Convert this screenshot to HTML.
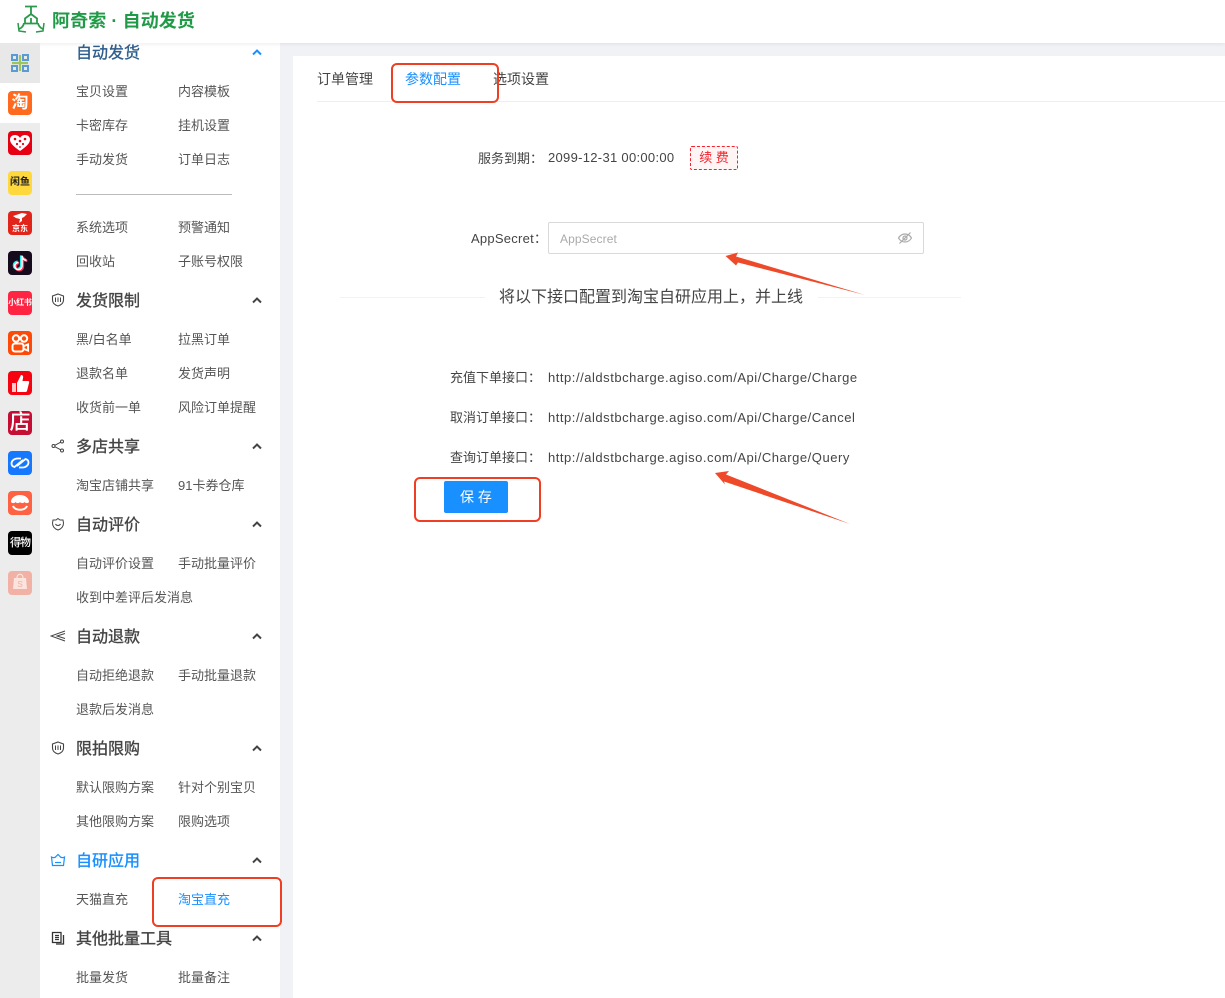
<!DOCTYPE html>
<html lang="zh"><head><meta charset="utf-8"><title>阿奇索 · 自动发货</title>
<style>
*{margin:0;padding:0;box-sizing:border-box}
html,body{width:1225px;height:998px;overflow:hidden;background:#f0f2f5;font-family:"Liberation Sans","Noto Sans CJK SC",sans-serif;color:#333}
.a{position:absolute;white-space:nowrap}
#top{left:0;top:0;width:1225px;height:43px;background:#fff;box-shadow:0 1px 4px rgba(0,21,41,.08)}
#rail{left:0;top:43px;width:40px;height:955px;background:#ececec}
#side{left:40px;top:43px;width:240px;height:955px;background:#fff}
#main{left:293px;top:56px;width:932px;height:942px;background:#fff}
.i{position:absolute;font-size:13px;line-height:20px;color:#555;white-space:nowrap;margin-top:2px}
.h{position:absolute;left:76px;font-size:16px;line-height:24px;color:#444;font-weight:400;white-space:nowrap;-webkit-text-stroke:.35px currentColor;margin-top:4px}
.ic{position:absolute;left:8px;width:24px;height:24px;border-radius:4px;color:#fff;text-align:center;overflow:hidden}
.chev{position:absolute;left:252px;width:10px;height:7px}
.gl{position:absolute;left:51px;width:14px;height:14px}
.l{position:absolute;font-size:13px;line-height:20px;color:#444;text-align:right;white-space:nowrap}
.u{position:absolute;left:548px;font-size:13px;line-height:20px;color:#444;white-space:nowrap;letter-spacing:.53px}
.red{position:absolute;border:2.500px solid #ee3f24;border-radius:6px}
</style></head><body>
<div class="a" id="rail"></div>
<div class="a" id="side"></div>
<div class="a" id="main"></div>
<div class="a" id="top"></div>

<!-- logo -->
<svg class="a" style="left:17px;top:5px" width="28" height="28" viewBox="0 0 28 28" fill="none" stroke="#2a9a4a" stroke-width="1.800">
<path d="M8 1.500h12M14 1.500v9"/><path d="M14 9l-6 4.500v5h12v-5zM14 13v5.500"/><path d="M7 18c-.5 3-2.500 5-5 6M21 18c.5 3 2.500 5 5 6"/><path d="M1 18l1 8 7 1M27 18l-1 8-7 1" stroke-width="1.500"/></svg>
<div class="a" style="left:52px;top:8px;font-size:18px;line-height:26px;font-weight:700;color:#1f9a46;letter-spacing:.1px">阿奇索 · 自动发货</div>

<!-- rail -->
<div class="a" style="left:0;top:43px;width:40px;height:40px;background:#e8e8e8"></div>
<div class="a" style="left:0;top:83px;width:40px;height:40px;background:#fff"></div>
<svg class="a" style="left:10px;top:53px" width="20" height="20" viewBox="0 0 20 20" fill="none"><g stroke="#5b9bd5" stroke-width="2"><path d="M2 2h5v5H2zM13 2h5v5h-5zM2 13h5v5H2zM13 13h5v5h-5z"/></g><path d="M10 2v16M2 10h16" stroke="#9cc65c" stroke-width="2.200"/></svg>
<div class="ic" style="top:91px;background:#ff6a1f;font-size:17px;line-height:24px;font-weight:700">淘</div>
<div class="ic" style="top:131px;background:#e60012"><svg width="24" height="24" viewBox="0 0 24 24"><path d="M12 20C5 15 2 12 2 8.500 2 5.500 4.500 4 7 4c2 0 4 1 5 3 1-2 3-3 5-3 2.500 0 5 1.500 5 4.500C22 12 19 15 12 20z" fill="#fff"/><g fill="#e60012"><circle cx="7" cy="8" r="1.300"/><circle cx="12" cy="10" r="1.300"/><circle cx="17" cy="8" r="1.300"/><circle cx="9" cy="13" r="1.100"/><circle cx="15" cy="13" r="1.100"/><circle cx="12" cy="16" r=".9"/></g></svg></div>
<div class="ic" style="top:171px;background:#ffd83d;color:#222;font-size:10px;line-height:24px;font-weight:700">闲鱼</div>
<div class="ic" style="top:211px;background:#e1251b"><svg width="24" height="15" viewBox="0 0 24 15" style="display:block"><path d="M5 5l6-2 3-1 5 1-3 3-2 1v3l-3 2 1-4-4-1z" fill="#fff"/></svg><div style="font-size:8px;line-height:8px;font-weight:700;margin-top:-1px">京东</div></div>
<div class="ic" style="top:251px;background:#160b1c"><svg width="24" height="24" viewBox="0 0 24 24" fill="none" stroke-width="2.600"><path d="M14 5v10a3.600 3.600 0 1 1-3.600-3.600M14 5c.4 2.500 2 4 4.500 4.300" stroke="#25f4ee" transform="translate(-.8 -.6)"/><path d="M14 5v10a3.600 3.600 0 1 1-3.600-3.600M14 5c.4 2.500 2 4 4.500 4.300" stroke="#fe2c55" transform="translate(.8 .6)"/><path d="M14 5v10a3.600 3.600 0 1 1-3.600-3.600M14 5c.4 2.500 2 4 4.500 4.300" stroke="#fff" stroke-width="1.600"/></svg></div>
<div class="ic" style="top:291px;background:#ff2442;font-size:8px;line-height:24px;font-weight:700;letter-spacing:-.2px">小红书</div>
<div class="ic" style="top:331px;background:#ff4906"><svg width="24" height="24" viewBox="0 0 24 24" fill="none" stroke="#fff" stroke-width="2"><circle cx="8" cy="7.500" r="3.200"/><circle cx="16" cy="7.500" r="3.200"/><rect x="4.500" y="12.500" width="11" height="8" rx="2.500"/><path d="M16 15l4-1.500v6L16 18"/></svg></div>
<div class="ic" style="top:371px;background:#f60311"><svg width="24" height="24" viewBox="0 0 24 24"><path d="M4 12h4v9H4z" fill="#ffc9c9"/><path d="M9 12l4-8c2 0 2.500 1.500 2 3l-.5 3H20c1 0 1.500 1 1 2l-2 8c-.3.700-1 1-1.500 1H9z" fill="#fff"/></svg></div>
<div class="ic" style="top:411px;background:#c40e33;font-size:21px;line-height:24px;font-weight:500">店</div>
<div class="ic" style="top:451px;background:#1677ff"><svg width="24" height="24" viewBox="0 0 24 24" fill="none" stroke="#fff" stroke-width="1.800"><path d="M13 7.500H9.500C6 7.500 3.500 10 3.500 12.500c0 1.500 1 3 3 3.500L15 9"/><path d="M11 16.500h3.500c3.500 0 6-2.500 6-5 0-1.500-1-3-3-3.500L9 15"/></svg></div>
<div class="ic" style="top:491px;background:#ff6242"><svg width="24" height="24" viewBox="0 0 24 24"><path d="M3 11c0-4 4-7 9-7s9 3 9 7c-1 1.500-3.500 1.500-4.500 0-1 1.500-3.500 1.500-4.500 0-1 1.500-3.500 1.500-4.500 0C6.500 12.500 4 12.500 3 11z" fill="#fff"/><path d="M5 15c2 5 12 5 14 0" fill="none" stroke="#fff" stroke-width="2"/></svg></div>
<div class="ic" style="top:531px;background:#000;font-size:11px;line-height:24px;font-weight:500;letter-spacing:-1px">得物</div>
<div class="ic" style="top:571px;background:#f2b1a5"><svg width="24" height="24" viewBox="0 0 24 24"><path d="M6 7h12l1 11H5z" fill="#fbe3de"/><path d="M9 7c0-5 6-5 6 0" fill="none" stroke="#fbe3de" stroke-width="1.300"/><text x="12" y="16" font-size="8" font-family="Liberation Sans" fill="#f2b1a5" text-anchor="middle">S</text></svg></div>

<!-- sidebar -->
<div class="h" style="top:38px;color:#2f5d8c">自动发货</div>
<div class="i" style="left:76px;top:80px">宝贝设置</div><div class="i" style="left:178px;top:80px">内容模板</div>
<div class="i" style="left:76px;top:114px">卡密库存</div><div class="i" style="left:178px;top:114px">挂机设置</div>
<div class="i" style="left:76px;top:148px">手动发货</div><div class="i" style="left:178px;top:148px">订单日志</div>
<div class="a" style="left:76px;top:194px;width:156px;height:1px;background:#bbb"></div>
<div class="i" style="left:76px;top:216px">系统选项</div><div class="i" style="left:178px;top:216px">预警通知</div>
<div class="i" style="left:76px;top:250px">回收站</div><div class="i" style="left:178px;top:250px">子账号权限</div>

<div class="h" style="top:286px">发货限制</div>
<div class="i" style="left:76px;top:328px">黑/白名单</div><div class="i" style="left:178px;top:328px">拉黑订单</div>
<div class="i" style="left:76px;top:362px">退款名单</div><div class="i" style="left:178px;top:362px">发货声明</div>
<div class="i" style="left:76px;top:396px">收货前一单</div><div class="i" style="left:178px;top:396px">风险订单提醒</div>

<div class="h" style="top:432px">多店共享</div>
<div class="i" style="left:76px;top:474px">淘宝店铺共享</div><div class="i" style="left:178px;top:474px">91卡券仓库</div>

<div class="h" style="top:510px">自动评价</div>
<div class="i" style="left:76px;top:552px">自动评价设置</div><div class="i" style="left:178px;top:552px">手动批量评价</div>
<div class="i" style="left:76px;top:586px">收到中差评后发消息</div>

<div class="h" style="top:622px">自动退款</div>
<div class="i" style="left:76px;top:664px">自动拒绝退款</div><div class="i" style="left:178px;top:664px">手动批量退款</div>
<div class="i" style="left:76px;top:698px">退款后发消息</div>

<div class="h" style="top:734px">限拍限购</div>
<div class="i" style="left:76px;top:776px">默认限购方案</div><div class="i" style="left:178px;top:776px">针对个别宝贝</div>
<div class="i" style="left:76px;top:810px">其他限购方案</div><div class="i" style="left:178px;top:810px">限购选项</div>

<div class="h" style="top:846px;color:#1890ff">自研应用</div>
<div class="i" style="left:76px;top:888px">天猫直充</div><div class="i" style="left:178px;top:888px;color:#1890ff">淘宝直充</div>

<div class="h" style="top:924px">其他批量工具</div>
<div class="i" style="left:76px;top:966px">批量发货</div><div class="i" style="left:178px;top:966px">批量备注</div>

<!-- chevrons -->
<svg class="chev" style="top:49px" viewBox="0 0 10 7" fill="none" stroke="#1890ff" stroke-width="2"><path d="M1 5.500l4-4 4 4"/></svg>
<svg class="chev" style="top:297px" viewBox="0 0 10 7" fill="none" stroke="#444" stroke-width="2"><path d="M1 5.500l4-4 4 4"/></svg>
<svg class="chev" style="top:443px" viewBox="0 0 10 7" fill="none" stroke="#444" stroke-width="2"><path d="M1 5.500l4-4 4 4"/></svg>
<svg class="chev" style="top:521px" viewBox="0 0 10 7" fill="none" stroke="#444" stroke-width="2"><path d="M1 5.500l4-4 4 4"/></svg>
<svg class="chev" style="top:633px" viewBox="0 0 10 7" fill="none" stroke="#444" stroke-width="2"><path d="M1 5.500l4-4 4 4"/></svg>
<svg class="chev" style="top:745px" viewBox="0 0 10 7" fill="none" stroke="#444" stroke-width="2"><path d="M1 5.500l4-4 4 4"/></svg>
<svg class="chev" style="top:857px" viewBox="0 0 10 7" fill="none" stroke="#444" stroke-width="2"><path d="M1 5.500l4-4 4 4"/></svg>
<svg class="chev" style="top:935px" viewBox="0 0 10 7" fill="none" stroke="#444" stroke-width="2"><path d="M1 5.500l4-4 4 4"/></svg>

<!-- section icons -->
<svg class="gl" style="top:293px" viewBox="0 0 14 14" fill="none" stroke="#444" stroke-width="1.100"><path d="M7 1l5.500 2v4c0 3-2.500 5-5.500 6C4 12 1.500 10 1.500 7V3z"/><path d="M4.500 4.500v4.500M7 4.500v4.500M9.500 4.500v4.500" stroke-width="1"/></svg>
<svg class="gl" style="top:439px" viewBox="0 0 14 14" fill="none" stroke="#444" stroke-width="1"><circle cx="2.500" cy="7" r="1.500"/><circle cx="11" cy="2.500" r="1.500"/><circle cx="11" cy="11.500" r="1.500"/><path d="M3.800 6.300L9.700 3.200M3.800 7.700l5.900 3.100"/></svg>
<svg class="gl" style="top:517px" viewBox="0 0 14 14" fill="none" stroke="#444" stroke-width="1"><path d="M7 1.500l2 1.500 3 0 .5 3C12.500 10 10 12 7 13 4 12 1.500 10 1.500 6L2 3l3 0z"/><path d="M4.500 7c1 2 4 2 5 0"/></svg>
<svg class="gl" style="top:629px;left:50px;width:16px" viewBox="0 0 16 14" fill="none" stroke="#444" stroke-width="1"><path d="M15 2L1 7l14 5"/><path d="M15 4.500L7 7l8 2.500"/></svg>
<svg class="gl" style="top:741px" viewBox="0 0 14 14" fill="none" stroke="#444" stroke-width="1.100"><path d="M7 1l5.500 2v4c0 3-2.500 5-5.500 6C4 12 1.500 10 1.500 7V3z"/><path d="M4.500 4.500v4.500M7 4.500v4.500M9.500 4.500v4.500" stroke-width="1"/></svg>
<svg class="gl" style="top:853px;left:50px;width:16px;height:14px" viewBox="0 0 16 14" fill="none" stroke="#1890ff" stroke-width="1.200"><path d="M1.500 4c2 1 3.500 1 4.500-.5L8 1.500l2 2c1 1.500 2.500 1.500 4.500.5l-1 8.500h-11z"/><path d="M5 9.500h6"/></svg>
<svg class="gl" style="top:931px" viewBox="0 0 14 14" fill="none" stroke="#333" stroke-width="1.300"><path d="M1.500 1.500h8.500v10h-8.500z"/><path d="M4 4.500h4M4 6.500h4M4 8.500h4"/><path d="M12.500 4v9H5"/></svg>

<!-- tabs -->
<div class="a" style="left:317px;top:69px;font-size:14px;line-height:20px;color:#444">订单管理</div>
<div class="a" style="left:405px;top:69px;font-size:14px;line-height:20px;color:#1890ff">参数配置</div>
<div class="a" style="left:493px;top:69px;font-size:14px;line-height:20px;color:#444">选项设置</div>
<div class="a" style="left:317px;top:101px;width:908px;height:1px;background:#eee"></div>

<!-- form -->
<div class="l" style="left:478px;top:148px;margin-top:1px">服务到期：</div>
<div class="u" style="top:148px;letter-spacing:.3px">2099-12-31 00:00:00</div>
<div class="a" style="left:690px;top:146px;width:48px;height:24px;border:1px dashed #f5222d;border-radius:2px;background:#fff5f5;color:#f5222d;font-size:13px;line-height:22px;text-align:center">续 费</div>

<div class="l" style="left:471px;top:229px;letter-spacing:.25px">AppSecret：</div>
<div class="a" style="left:548px;top:222px;width:376px;height:32px;border:1px solid #d9d9d9;border-radius:2px;background:#fff"></div>
<div class="a" style="left:560px;top:230px;font-size:12px;line-height:18px;color:#aaa;letter-spacing:.1px">AppSecret</div>
<svg class="a" style="left:897px;top:231px" width="16" height="14" viewBox="0 0 16 14" fill="none" stroke="#aaa" stroke-width="1.200"><path d="M1.500 7C3 4.500 5.500 3 8 3s5 1.500 6.500 4C13 9.500 10.500 11 8 11S3 9.500 1.500 7z"/><circle cx="8" cy="7" r="2"/><path d="M13.500 1.500l-11 11"/></svg>

<div class="a" style="left:340px;top:297px;width:145px;height:1px;background:#f2f2f2"></div>
<div class="a" style="left:818px;top:297px;width:143px;height:1px;background:#f2f2f2"></div>
<div class="a" style="left:499px;top:287px;font-size:16px;line-height:21px;color:#444">将以下接口配置到淘宝自研应用上，并上线</div>

<div class="l" style="left:450px;top:368px">充值下单接口：</div>
<div class="u" style="top:368px">http://aldstbcharge.agiso.com/Api/Charge/Charge</div>
<div class="l" style="left:450px;top:408px">取消订单接口：</div>
<div class="u" style="top:408px">http://aldstbcharge.agiso.com/Api/Charge/Cancel</div>
<div class="l" style="left:450px;top:448px">查询订单接口：</div>
<div class="u" style="top:448px">http://aldstbcharge.agiso.com/Api/Charge/Query</div>

<div class="a" style="left:444px;top:481px;width:64px;height:32px;background:#1890ff;border-radius:2px;color:#fff;font-size:14px;line-height:32px;text-align:center">保 存</div>

<!-- annotations -->
<div class="red" style="left:391px;top:63px;width:108px;height:40px"></div>
<div class="red" style="left:414px;top:477px;width:127px;height:45px"></div>
<div class="red" style="left:152px;top:877px;width:130px;height:50px"></div>
<svg class="a" style="left:0;top:0" width="1225" height="998" fill="#ee4a2a">
<path d="M725.500 256L738 252.500 736 256.500 865 295 738 262.500 736 265.500z"/>
<path d="M715 473L729 471 726 474.500 850 524 724 481.500 725 484.500z"/>
</svg>
</body></html>
